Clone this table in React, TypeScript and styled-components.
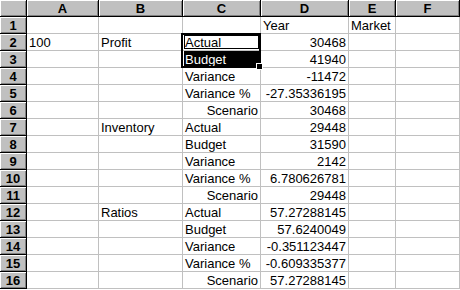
import React from "react";
import styled, { createGlobalStyle } from "styled-components";

const GlobalStyle = createGlobalStyle`
  body {
    margin: 0;
    background: #fff;
  }
`;

const Sheet = styled.div`
  position: relative;
  display: grid;
  grid-template-columns: 27px 72px 84px 78px 88px 47px 1fr;
  grid-auto-rows: 17px;
  width: 460px;
  font-family: "Liberation Sans", Arial, sans-serif;
  font-size: 13px;
  color: #000;
`;

const HeaderCell = styled.div`
  box-sizing: border-box;
  background: #c0c0c0;
  border-right: 1px solid #000;
  border-bottom: 1px solid #000;
  box-shadow: inset 1px 1px 0 #fff, inset -1px -1px 0 #808080;
  font-weight: bold;
  text-align: center;
  line-height: 17px;
`;

type CellState = "active" | "selected";

const Cell = styled.div<{ $align?: "left" | "right"; $state?: CellState }>`
  box-sizing: border-box;
  border-right: 1px solid #c0c0c0;
  border-bottom: 1px solid #c0c0c0;
  padding: 0 2px;
  line-height: 17px;
  white-space: nowrap;
  overflow: hidden;
  text-align: ${(p) => p.$align ?? "left"};
  background: ${(p) => (p.$state === "selected" ? "#000" : "#fff")};
  color: ${(p) => (p.$state === "selected" ? "#fff" : "#000")};
  box-shadow: ${(p) =>
    p.$state === "active"
      ? "inset 0 0 0 1px #fff, inset 0 0 0 2px #000"
      : p.$state === "selected"
      ? "inset 1px 0 0 #fff, inset -1px -1px 0 #fff"
      : "none"};
`;

// thick border round the selected range C2:C3
const SelectionFrame = styled.div`
  position: absolute;
  left: 181px;
  top: 33px;
  width: 80px;
  height: 35px;
  box-sizing: border-box;
  border: 2px solid #000;
  pointer-events: none;
`;

const FillHandle = styled.div`
  position: absolute;
  left: 257px;
  top: 64px;
  width: 5px;
  height: 5px;
  background: #000;
  outline: 1px solid #fff;
  pointer-events: none;
`;

type CellData = { text?: string; align?: "left" | "right"; state?: CellState };

const columns = ["A", "B", "C", "D", "E", "F"];

const n = (text: string): CellData => ({ text, align: "right" });

const rows: CellData[][] = [
  [{}, {}, {}, { text: "Year" }, { text: "Market" }, {}],
  [{ text: "100" }, { text: "Profit" }, { text: "Actual", state: "active" }, n("30468"), {}, {}],
  [{}, {}, { text: "Budget", state: "selected" }, n("41940"), {}, {}],
  [{}, {}, { text: "Variance" }, n("-11472"), {}, {}],
  [{}, {}, { text: "Variance %" }, n("-27.35336195"), {}, {}],
  [{}, {}, n("Scenario"), n("30468"), {}, {}],
  [{}, { text: "Inventory" }, { text: "Actual" }, n("29448"), {}, {}],
  [{}, {}, { text: "Budget" }, n("31590"), {}, {}],
  [{}, {}, { text: "Variance" }, n("2142"), {}, {}],
  [{}, {}, { text: "Variance %" }, n("6.780626781"), {}, {}],
  [{}, {}, n("Scenario"), n("29448"), {}, {}],
  [{}, { text: "Ratios" }, { text: "Actual" }, n("57.27288145"), {}, {}],
  [{}, {}, { text: "Budget" }, n("57.6240049"), {}, {}],
  [{}, {}, { text: "Variance" }, n("-0.351123447"), {}, {}],
  [{}, {}, { text: "Variance %" }, n("-0.609335377"), {}, {}],
  [{}, {}, n("Scenario"), n("57.27288145"), {}, {}],
];

const App = () => {
  return (
    <>
      <GlobalStyle />
      <Sheet>
        <HeaderCell />
        {columns.map((c) => (
          <HeaderCell key={c}>{c}</HeaderCell>
        ))}
        {rows.map((row, i) => (
          <React.Fragment key={i}>
            <HeaderCell>{i + 1}</HeaderCell>
            {row.map((cell, j) => (
              <Cell key={j} $align={cell.align} $state={cell.state}>
                {cell.text}
              </Cell>
            ))}
          </React.Fragment>
        ))}
        <SelectionFrame />
        <FillHandle />
      </Sheet>
    </>
  );
};

export default App;
